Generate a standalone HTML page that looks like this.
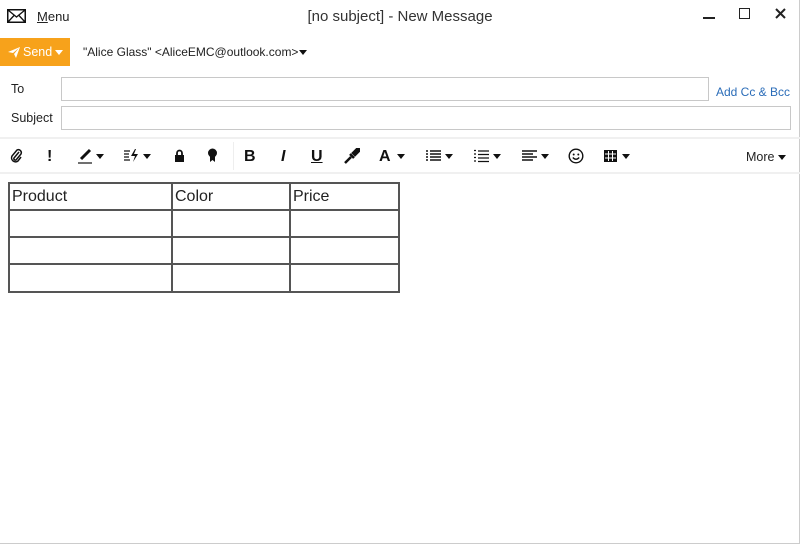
<!DOCTYPE html>
<html><head><meta charset="utf-8"><style>
*{margin:0;padding:0;box-sizing:border-box}
body{width:800px;height:544px;background:#fff;font-family:"Liberation Sans",sans-serif;color:#222;position:relative;overflow:hidden;border-right:1px solid #ccc;border-bottom:1px solid #ccc}
.a{position:absolute}
.inp{position:absolute;border:1px solid #c8c8c8;background:#fff}
.tb{position:absolute;top:148px;font-size:16px;font-weight:bold;color:#111}
.ca{position:absolute;width:0;height:0;border-left:4px solid transparent;border-right:4px solid transparent;border-top:5px solid #111}
.h{position:absolute;left:8px;width:392px;height:2px;background:#555}
.v{position:absolute;top:182px;width:2px;height:111px;background:#555}
.c{position:absolute;top:188px;font-size:16px;color:#222}
</style></head><body>
<svg class="a" style="left:7px;top:9px" width="19" height="14" viewBox="0 0 19 14"><rect x="0.75" y="0.75" width="17.5" height="12.5" fill="none" stroke="#111" stroke-width="1.5"/><path d="M1 1 L9.5 8 L18 1 M1 13 L7 6.5 M18 13 L12 6.5" fill="none" stroke="#111" stroke-width="1.3"/></svg>
<div class="a" style="left:37px;top:9px;font-size:13px"><u>M</u>enu</div>
<div class="a" style="left:0;width:800px;top:8px;text-align:center;font-size:15px;color:#333">[no subject] - New Message</div>
<div class="a" style="left:703px;top:17px;width:12px;height:2px;background:#222"></div>
<div class="a" style="left:739px;top:8px;width:11px;height:11px;border:1.5px solid #222"></div>
<svg class="a" style="left:775px;top:8px" width="11" height="11"><path d="M1 1L10 10M10 1L1 10" stroke="#222" stroke-width="2"/></svg>
<div class="a" style="left:0;top:38px;width:70px;height:28px;background:#f7a21b"></div>
<svg class="a" style="left:8px;top:47px" width="12" height="11" viewBox="0 0 12 11"><path d="M0 5L12 0L8 11L6 7L11 1L5 6Z" fill="#fff"/></svg>
<div class="a" style="left:23px;top:45px;font-size:12.5px;color:#fff">Send</div>
<div class="ca" style="left:55px;top:50px;border-top-color:#fff"></div>
<div class="a" style="left:83px;top:45px;font-size:12px;color:#222">"Alice Glass" &lt;AliceEMC@outlook.com&gt;</div>
<div class="ca" style="left:299px;top:50px"></div>
<div class="a" style="left:11px;top:82px;font-size:12.5px">To</div>
<div class="inp" style="left:61px;top:77px;width:648px;height:24px"></div>
<div class="a" style="left:716px;top:85px;font-size:12px;color:#2a6cb8">Add Cc &amp; Bcc</div>
<div class="a" style="left:11px;top:111px;font-size:12.5px">Subject</div>
<div class="inp" style="left:61px;top:106px;width:730px;height:24px"></div>
<div class="a" style="left:0;top:137px;width:800px;height:2px;background:#f0f0f0"></div>
<div class="a" style="left:0;top:172px;width:800px;height:2px;background:#f0f0f0"></div>
<div class="a" style="left:233px;top:142px;width:1px;height:28px;background:#eee"></div>
<svg class="a" style="left:10px;top:148px" width="13" height="15" viewBox="0 0 13 15"><path d="M9 4L4 10a1.5 1.5 0 0 0 2 2L11 6a3 3 0 0 0-4-4L2 8a4 4 0 0 0 6 5l3-4" fill="none" stroke="#111" stroke-width="1.5"/></svg>
<div class="tb" style="left:47px">!</div>
<svg class="a" style="left:77px;top:148px" width="16" height="16"><path d="M4 11L13 2" stroke="#111" stroke-width="3"/><path d="M1 15h14" stroke="#111" stroke-width="1.2"/></svg>
<div class="ca" style="left:96px;top:154px"></div>
<svg class="a" style="left:124px;top:149px" width="17" height="13"><path d="M0 2h6M0 5h5M0 8h5M0 11h6" stroke="#111" stroke-width="1.2"/><path d="M11 0L7 7h4l-2 6 5-8h-4l2-5z" fill="#111"/></svg>
<div class="ca" style="left:143px;top:154px"></div>
<svg class="a" style="left:174px;top:149px" width="11" height="13"><path d="M3 6V4a2.5 2.5 0 0 1 5 0v2" fill="none" stroke="#111" stroke-width="1.8"/><rect x="1" y="6" width="9" height="7" fill="#111"/></svg>
<svg class="a" style="left:207px;top:148px" width="11" height="15"><circle cx="5.5" cy="5" r="4.5" fill="#111"/><path d="M3 8v6l2.5-2 2.5 2V8z" fill="#111"/></svg>
<div class="tb" style="left:244px">B</div>
<div class="tb" style="left:281px;font-style:italic">I</div>
<div class="tb" style="left:311px;text-decoration:underline">U</div>
<svg class="a" style="left:344px;top:148px" width="16" height="16"><path d="M1 15l6-6M6 6l4 4M9 5l5-5 2 2-5 5z" stroke="#111" stroke-width="2.5" fill="#111"/></svg>
<div class="tb" style="left:379px">A</div>
<div class="ca" style="left:397px;top:154px"></div>
<svg class="a" style="left:426px;top:150px" width="15" height="11"><path d="M0 1h2M0 4h2M0 7h2M0 10h2M4 1h11M4 4h11M4 7h11M4 10h11" stroke="#111" stroke-width="1.4"/></svg>
<div class="ca" style="left:445px;top:154px"></div>
<svg class="a" style="left:474px;top:149px" width="15" height="14"><path d="M0 1.5h2M0 5h2M0 8.5h2M0 12h2M4 2h11M4 5.5h11M4 9h11M4 12.5h11" stroke="#111" stroke-width="1.3"/></svg>
<div class="ca" style="left:493px;top:154px"></div>
<svg class="a" style="left:522px;top:150px" width="15" height="11"><path d="M0 1h15M0 4h11M0 7h15M0 10h11" stroke="#111" stroke-width="1.4"/></svg>
<div class="ca" style="left:541px;top:154px"></div>
<svg class="a" style="left:568px;top:148px" width="16" height="16"><circle cx="8" cy="8" r="6.8" fill="none" stroke="#111" stroke-width="1.4"/><circle cx="5.7" cy="6.5" r="1" fill="#111"/><circle cx="10.3" cy="6.5" r="1" fill="#111"/><path d="M4.8 9.5Q8 13 11.2 9.5" fill="none" stroke="#111" stroke-width="1.3"/></svg>
<svg class="a" style="left:604px;top:150px" width="13" height="12"><rect width="13" height="12" fill="#111"/><path d="M1 4H12M1 8H12M4.5 1V11M8.5 1V11" stroke="#fff" stroke-width="1"/></svg>
<div class="ca" style="left:622px;top:154px"></div>
<div class="a" style="left:746px;top:150px;font-size:12.5px;color:#222">More</div>
<div class="ca" style="left:778px;top:155px"></div>
<div class="h" style="top:182px"></div><div class="h" style="top:209px"></div><div class="h" style="top:236px"></div><div class="h" style="top:263px"></div><div class="h" style="top:291px"></div>
<div class="v" style="left:8px"></div><div class="v" style="left:171px"></div><div class="v" style="left:289px"></div><div class="v" style="left:398px"></div>
<div class="c" style="left:12px">Product</div><div class="c" style="left:175px">Color</div><div class="c" style="left:293px">Price</div>
</body></html>
